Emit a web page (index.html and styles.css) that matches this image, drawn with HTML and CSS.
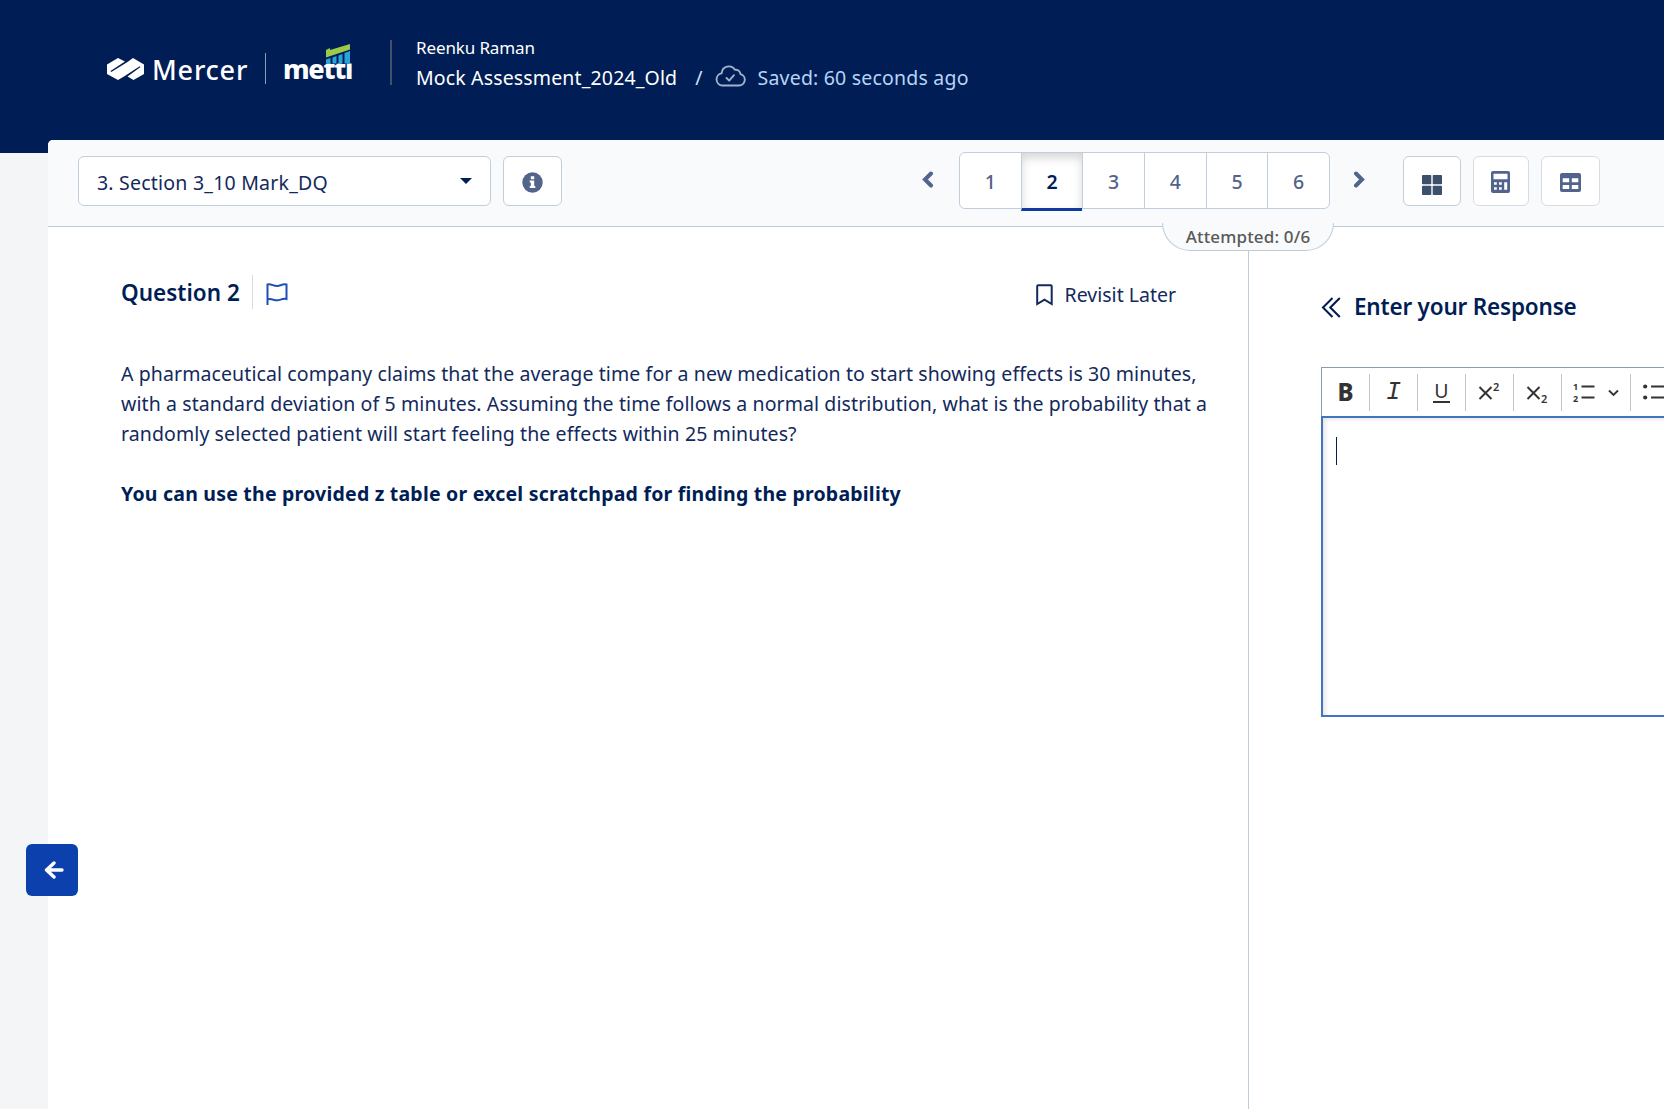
FILE: index.html
```html
<!DOCTYPE html>
<html lang="en">
<head>
<meta charset="utf-8">
<title>Mock Assessment</title>
<link rel="stylesheet" href="styles.css">
</head>
<body>
<header class="topbar">
  <div class="logo">
    <svg class="mercer-mark" width="37" height="24" viewBox="0 0 37 24"><path fill="#fff" d="M0 7.500L11 1l7 3.500L3.500 14l.8.900L20.500 5 26 1l11 6.500V17L26.500 23l-6-3.500L33.500 10l-.8-.8L17 19.500 11 23 0 17z"/></svg>
    <span class="t mercer">Mercer</span>
    <span class="logo-rule"></span>
    <span class="mettl-logo"><span class="t mettl">mettl</span>
      <svg class="mettl-bars" width="28" height="22" viewBox="0 0 28 22"><path fill="#001e55" d="M0 0h28v20.500H0z"/><path fill="#9ccb4b" d="M1 7l4-2v2l20-6v5.500L1 14.500z"/><path fill="#29a3dc" d="M1 16.500l4.500-1.500v5.500H1zM7.500 14.500l4-1.500v7.500h-4zM13.500 12.500l4-1.500v9.500h-4zM19.500 10L25 8v12.500h-5.500z"/></svg>
    </span>
  </div>
  <span class="top-rule"></span>
  <div class="test-info">
    <div class="t user">Reenku Raman</div>
    <div class="test-row">
      <span class="t test-name">Mock Assessment_2024_Old</span>
      <span class="t slash">/</span>
      <svg class="cloud" width="31" height="22" viewBox="0 0 31 22" fill="none" stroke="#a3b2cc" stroke-width="1.900" stroke-linecap="round" stroke-linejoin="round"><path d="M7.500 20.500h16.500a5.800 5.800 0 0 0 1.500-11.400 5 5 0 0 0-5.500-4.300A7.200 7.200 0 0 0 6.700 8.200 6.200 6.200 0 0 0 7.500 20.500z"/><path d="M11.500 13l2.700 2.700 4.800-5.500"/></svg>
      <span class="t saved">Saved: 60 seconds ago</span>
    </div>
  </div>
</header>
<main class="card">
  <nav class="toolbar">
    <div class="select"><span class="t section">3. Section 3_10 Mark_DQ</span><svg width="12" height="6" viewBox="0 0 12 6"><path fill="#001e55" d="M0 0h12L6 6z"/></svg></div>
    <div class="btn info"><svg width="21" height="21" viewBox="0 0 21 21"><circle cx="10.500" cy="10.500" r="10.200" fill="#52648c"/><path fill="#fff" d="M8.800 4.300h3.400v3H8.800zM7.700 8.600h4.500v5.400h1.100v2H7.700v-2h1.100v-3.400H7.700z"/></svg></div>
    <svg class="prev" width="12" height="17" viewBox="0 0 12 17"><path d="M9 2.500l-6 6 6 6" fill="none" stroke="#52648c" stroke-width="4" stroke-linecap="round"/></svg>
    <div class="pages"><span>1</span><span class="active">2</span><span>3</span><span>4</span><span>5</span><span>6</span></div>
    <svg class="next" width="12" height="17" viewBox="0 0 12 17"><path d="M3 2.500l6 6-6 6" fill="none" stroke="#52648c" stroke-width="4" stroke-linecap="round"/></svg>
    <div class="btn grid"><svg width="20" height="20" viewBox="0 0 20 20" fill="#3d506b"><rect width="9.300" height="9.300" rx=".8"/><rect x="10.700" width="9.300" height="9.300" rx=".8"/><rect y="10.700" width="9.300" height="9.300" rx=".8"/><rect x="10.700" y="10.700" width="9.300" height="9.300" rx=".8"/></svg></div>
    <div class="btn calc"><svg width="19" height="22" viewBox="0 0 19 22"><rect width="19" height="22" rx="2" fill="#52648c"/><path fill="#fff" d="M2.500 2.700h14v5.500h-14zM3 11.200h2.800v2.600H3zM8 11.200h2.800v2.600H8zM3 16.200h2.800v2.600H3zM8 16.200h2.800v2.600H8zM13.200 11.200h3v7.600h-3z"/></svg></div>
    <div class="btn table"><svg width="21" height="19" viewBox="0 0 21 19"><rect width="21" height="19" rx="2" fill="#52648c"/><path fill="#fff" d="M2.700 5.200h6.500v4H2.700zM11.800 5.200h6.500v4h-6.500zM2.700 12h6.500v4H2.700zM11.800 12h6.500v4h-6.500z"/></svg></div>
    <div class="badge"><span class="t attempted">Attempted: 0/6</span></div>
  </nav>
  <div class="panes">
    <section class="question">
      <div class="q-head">
        <span class="t q-title">Question 2</span>
        <span class="q-rule"></span>
        <svg class="flag" width="22" height="22" viewBox="0 0 22 22" fill="none" stroke="#1d4fb8" stroke-width="2"><path d="M1.500 22V1.500C5 .500 8 3.500 11.500 3c3-.400 5-2.200 9-1.500V16c-4-.800-6 1-9 1.300C8 17.600 5 15 1.500 16.500"/></svg>
        <span class="revisit"><svg width="17" height="22" viewBox="0 0 17 22" fill="none" stroke="#13295c" stroke-width="2"><path d="M1.200 20V2.200q0-1 1-1h12.500q1 0 1 1V20l-7.200-4.300z"/></svg><span class="t later">Revisit Later</span></span>
      </div>
      <p class="q-text">
        <span class="t">A pharmaceutical company claims that the average time for a new medication to start showing effects is 30 minutes,</span>
        <span class="t">with a standard deviation of 5 minutes. Assuming the time follows a normal distribution, what is the probability that a</span>
        <span class="t">randomly selected patient will start feeling the effects within 25 minutes?</span>
      </p>
      <p class="q-text"><b class="t note">You can use the provided z table or excel scratchpad for finding the probability</b></p>
    </section>
    <section class="response">
      <h2><svg width="20" height="21" viewBox="0 0 20 21" fill="none" stroke="#001e55" stroke-width="2.100"><path d="M11.500 1L2 10.500l9.500 9.500M18.800 1l-9.500 9.500 9.500 9.500"/></svg><span class="t enter">Enter your Response</span></h2>
      <div class="editor">
        <div class="tools">
          <span class="tool bold">B</span>
          <span class="tool italic">I</span>
          <span class="tool under"><i>U</i></span>
          <span class="tool"><svg width="23" height="26" viewBox="0 0 23 26"><path d="M1.500 8l12 12M13.500 8l-12 12" stroke="#333" stroke-width="2"/><text class="digit" x="15" y="12">2</text></svg></span>
          <span class="tool"><svg width="23" height="26" viewBox="0 0 23 26"><path d="M1.500 8l12 12M13.500 8l-12 12" stroke="#333" stroke-width="2"/><text class="digit" x="15" y="23.500">2</text></svg></span>
          <span class="tool wide"><svg width="46" height="22" viewBox="0 0 46 22"><text class="num" x="0" y="8.500">1</text><text class="num" x="0" y="20.500">2</text><path d="M8.500 5.500h13M8.500 16.500h13M36 9.500l4.500 4.500 4.500-4.500" fill="none" stroke="#333" stroke-width="1.900"/></svg></span>
          <span class="tool bullets"><svg width="22" height="22" viewBox="0 0 22 22"><circle cx="2.200" cy="5.500" r="2.100" fill="#333"/><circle cx="2.200" cy="16.500" r="2.100" fill="#333"/><path d="M8 5.500h14M8 16.500h14" stroke="#333" stroke-width="1.900"/></svg></span>
        </div>
        <div class="area"><span class="caret"></span></div>
      </div>
    </section>
  </div>
</main>
<div class="back"><svg width="20" height="18" viewBox="0 0 20 18" fill="none" stroke="#fff" stroke-width="3.400" stroke-linecap="round" stroke-linejoin="round"><path d="M10 2L2.500 9l7.500 7M3 9h15" /></svg></div>
</body>
</html>
```
FILE: styles.css
```css
* { box-sizing: border-box; }
body {
  margin: 0;
  width: 1664px;
  height: 1109px;
  overflow: hidden;
  position: relative;
  background: #f4f5f7;
  color: #13295c;
  font: 19.5px/30px "Noto Sans", "Open Sans", sans-serif;
}
svg { display: block; flex: none; }
.t { white-space: nowrap; }
.topbar { height: 153px; background: #001e55; color: #fff; display: flex; align-items: flex-start; padding: 32px 0 0 107px; }
.logo { display: flex; height: 60px; width: 283px; padding-top: 18px; }
.mercer-mark { margin-top: 7px; }
.mercer { font-size: 27px; font-weight: 500; line-height: 39px; letter-spacing: .8px; margin-left: 8px; width: 96px; }
.logo-rule { width: 1px; height: 31px; background: #8a9abb; margin: 3px 0 0 17px; }
.mettl-logo { position: relative; margin-left: 17px; }
.mettl { font-size: 27px; font-weight: 800; line-height: 38px; letter-spacing: -1.3px; }
.mettl-bars { position: absolute; left: 42px; top: -7px; }
.top-rule { width: 2px; height: 45px; margin-top: 8px; background: #43506a; }
.test-info { padding: 1px 0 0 24px; }
.user { font-size: 17px; line-height: 30px; letter-spacing: -.12px; }
.test-row { display: flex; align-items: center; height: 30px; }
.test-name { letter-spacing: .15px; }
.slash { margin-left: 18px; color: #cfe0f8; }
.cloud { margin: -4px 12px 0 12px; }
.saved { color: #b8d4f5; letter-spacing: .2px; }
.card { margin: -13px 0 0 48px; height: 969px; background: #fff; border-top-left-radius: 5px; position: relative; }
.toolbar { height: 87px; background: #f8fafc; border-bottom: 1px solid #bfcddb; border-top-left-radius: 5px; display: flex; align-items: flex-start; padding: 12px 0 0 30px; position: relative; }
.select, .btn { height: 50px; margin-top: 4px; background: #fff; border: 1px solid #c1cedc; border-radius: 6px; display: flex; align-items: center; }
.select { width: 413px; padding: 0 18px; justify-content: space-between; color: #13295c; }
.section { letter-spacing: .22px; padding-top: 3px; }
.btn { justify-content: center; }
.info { width: 59px; margin-left: 12px; padding-top: 2px; }
.prev { margin: 19px 0 0 360px; }
.pages { display: flex; width: 371px; height: 57px; margin-left: 25px; background: #fff; border: 1px solid #c1cedc; border-radius: 6px; color: #52648c; font-weight: 500; }
.pages span { flex: 1; text-align: center; line-height: 57px; border-left: 1px solid #c1cedc; }
.pages span:first-child { border-left: 0; }
.pages .active { height: 58px; margin-bottom: -2px; color: #001e55; font-weight: 600; border-bottom: 3px solid #0f3ba0; box-shadow: inset 0 5px 10px rgba(0,0,0,.16); }
.next { margin: 19px 0 0 23px; }
.grid { width: 58px; margin-left: 38px; padding-top: 8px; }
.calc { width: 56px; margin-left: 12px; padding: 2px 1px 0 0; border-color: #d8dbe2; }
.table { width: 59px; margin-left: 12px; padding-top: 2px; border-color: #d8dbe2; }
.badge { position: absolute; left: 1114px; top: 83px; width: 172px; height: 28px; background: #f8fafc; border: 1px solid #bfcddb; border-top: 0; border-radius: 0 0 30px 30px; text-align: center; color: #585858; font-size: 17px; font-weight: 500; line-height: 27px; letter-spacing: .16px; }
.panes { display: flex; height: 882px; }
.question { flex: none; width: 1201px; border-right: 1px solid #c1ccd8; padding: 48px 0 0 73px; }
.q-head { display: flex; height: 34px; align-items: center; margin-bottom: 50px; }
.q-title { font-size: 22.5px; font-weight: 600; color: #001e55; padding-top: 2px; }
.q-rule { width: 1px; height: 34px; background: #d5dae1; margin: 0 13px 0 12px; }
.flag { margin-top: 3px; }
.revisit { margin: 5px 72px 0 auto; display: flex; align-items: center; gap: 12px; }
.q-text { margin: 0 0 30px; letter-spacing: .1px; }
.q-text .t { display: table; }
.note { color: #001e55; letter-spacing: .21px; }
.response { flex: 1; min-width: 0; padding-left: 72px; }
.response h2 { margin: 65px 0 45px; height: 30px; display: flex; align-items: center; gap: 13px; font-size: 22.5px; font-weight: 600; color: #001e55; letter-spacing: -.2px; }
.editor { width: 343px; }
.tools { height: 49px; border: 1px solid #8a9bb5; border-width: 1px 0 0 1px; display: flex; align-items: center; }
.tool { width: 48px; height: 37px; border-right: 1px solid #c4c4c4; display: flex; align-items: center; justify-content: center; color: #333; flex: none; }
.bold { font-size: 24px; font-weight: 800; }
.italic { font: italic 25px/30px "Liberation Mono", monospace; padding-top: 2px; }
.under i { font-style: normal; line-height: 20px; border-bottom: 2px solid #333; width: 17px; text-align: center; }
.wide { width: 69px; }
.bullets { width: 35px; border-right: 0; justify-content: flex-start; padding-left: 12px; }
.digit { font: 600 11px "Noto Sans", sans-serif; fill: #333; }
.num { font: 700 9px "Noto Sans", sans-serif; fill: #333; }
.area { height: 301px; border: 2px solid #4474bd; border-right: 0; box-shadow: inset 4px 3px 5px -2px rgba(0,0,0,.12); padding: 19px 0 0 13px; }
.caret { display: block; width: 1px; height: 28px; background: #001e55; }
.back { position: absolute; left: 26px; top: 844px; width: 52px; height: 52px; border-radius: 6px; background: #0b40ad; display: flex; align-items: center; justify-content: center; padding-left: 3px; }
```
